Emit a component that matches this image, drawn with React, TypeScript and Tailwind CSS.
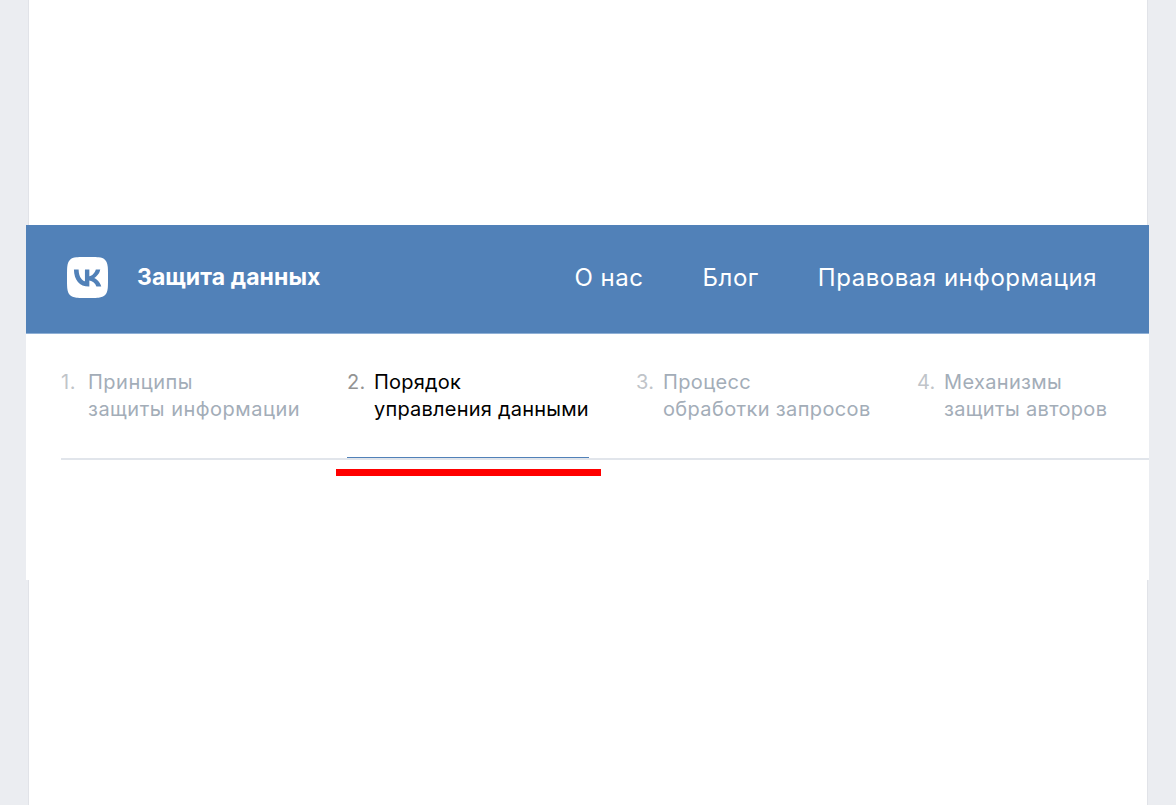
import { SiVk } from "react-icons/si";

const tabs = [
  { n: "1.", a: "Принципы", b: "защиты информации", w: "w-[239px] tracking-[0.5px]" },
  { n: "2.", a: "Порядок", b: "управления данными", active: true, w: "w-[242px] tracking-[0.22px]" },
  { n: "3.", a: "Процесс", b: "обработки запросов", w: "w-[234px] tracking-[0.36px]" },
  { n: "4.", a: "Механизмы", b: "защиты авторов", w: "w-[190px] tracking-[0.33px]" },
];

export default function App() {
  return (
    <div className="h-[805px] w-[1176px] overflow-hidden bg-[#ebedf1] font-['Inter','Liberation_Sans',sans-serif]">
      <div className="ml-[28px] h-[225px] w-[1120px] border-x border-[#e1e3e8] bg-white" />
      <div className="ml-[26px] h-[355px] w-[1123px] bg-white">
        <header className="flex h-[109px] items-center justify-between border-b border-[#8fb0d6] bg-[#5181b8] pb-[3px] pl-[41px] pr-[52px]">
          <div className="flex items-center gap-[29px]">
            <SiVk className="h-[41px] w-[41px] text-white" />
            <span className="text-[23px] font-bold tracking-[0.08px] text-white">Защита данных</span>
          </div>
          <nav className="flex items-center gap-[59px] text-[24px] tracking-[0.53px] text-white">
            <span>О нас</span>
            <span>Блог</span>
            <span>Правовая информация</span>
          </nav>
        </header>
        <div className="ml-[35px] flex h-[126px] gap-[47px] border-b-2 border-[#e1e5eb] pt-[35px]">
          {tabs.map((t) => (
            <div
              key={t.n}
              className={`relative flex h-[89px] items-start whitespace-nowrap text-[20px] leading-[27px] ${t.w} ${
                t.active ? "text-black" : "text-[#a3adb8]"
              }`}
            >
              <span className={`w-[27px] shrink-0 ${t.active ? "text-[#939393]" : "text-[#c0c4c9]"}`}>{t.n}</span>
              <span>
                {t.a}
                <br />
                {t.b}
              </span>
              {t.active && (
                <>
                  <span className="absolute bottom-0 left-0 right-0 h-[1px] bg-[#5181b8]" />
                  <span className="absolute -left-[11px] -right-[12px] top-[100px] h-[7px] bg-[#ff0000]" />
                </>
              )}
            </div>
          ))}
        </div>
      </div>
      <div className="ml-[28px] h-[225px] w-[1120px] border-x border-[#e1e3e8] bg-white" />
    </div>
  );
}
